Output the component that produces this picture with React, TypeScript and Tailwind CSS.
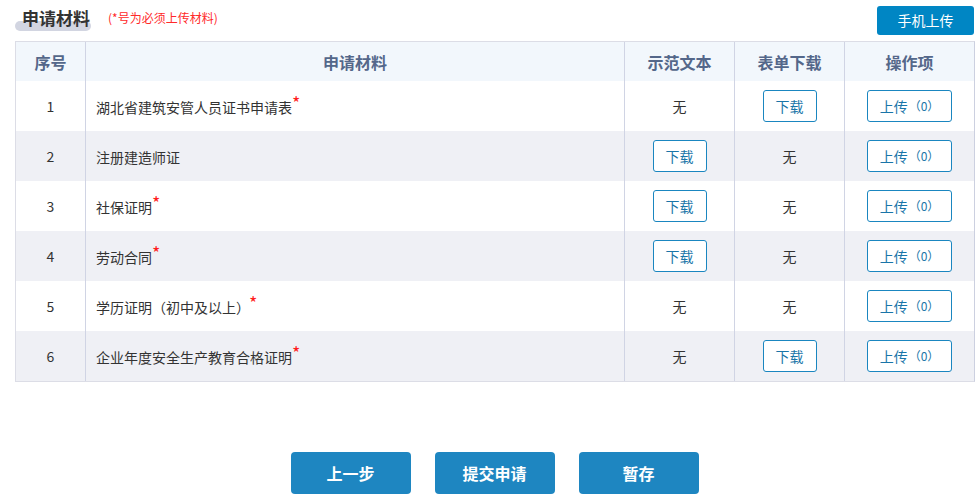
import React from "react";

const rows = [
  { no: 1, name: "湖北省建筑安管人员证书申请表", req: true, sample: false, form: true },
  { no: 2, name: "注册建造师证", req: false, sample: true, form: false },
  { no: 3, name: "社保证明", req: true, sample: true, form: false },
  { no: 4, name: "劳动合同", req: true, sample: true, form: false },
  { no: 5, name: "学历证明（初中及以上）", req: true, sample: false, form: false, gap: true },
  { no: 6, name: "企业年度安全生产教育合格证明", req: true, sample: false, form: true },
];

const font = { fontFamily: '"Microsoft YaHei", "Noto Sans CJK SC", "Liberation Sans", sans-serif' };

function DownloadBtn() {
  return (
    <button className="w-[54px] h-[32px] border border-[#1a86c0] rounded-[3px] text-[14px] text-[#1a75a8] bg-white">
      下载
    </button>
  );
}

function UploadBtn() {
  return (
    <button className="w-[85px] h-[32px] border border-[#1a86c0] rounded-[3px] text-[14px] text-[#1a75a8] bg-white flex items-center justify-center">
      上传<span className="text-[12px] ml-[1px]">（0）</span>
    </button>
  );
}

export default function App() {
  return (
    <div className="w-[977px] h-[496px] bg-white relative overflow-hidden" style={font}>
      <div className="flex items-start justify-between pl-[15px] pr-[3px] h-[41px]">
        <div className="flex items-start pt-[6px]">
          <div className="relative w-[76px] h-[26px]">
            <div className="absolute left-0 top-[15px] w-[76px] h-[10px] rounded-full bg-[#d2d5e1]" />
            <span className="absolute left-[7px] top-0 text-[17px] font-bold text-[#333] leading-[24px]">申请材料</span>
          </div>
          <span className="ml-[17px] mt-[4px] text-[12px] text-[#ff2a2a] leading-[16px]">(*号为必须上传材料)</span>
        </div>
        <button className="mt-[6px] w-[97px] h-[29px] rounded-[3px] bg-[#0086c4] text-white text-[14px]">
          手机上传
        </button>
      </div>
      <div className="mx-[15px] w-[960px] border border-[#dcdde6] border-r-[#ccd0e0]">
        <div className="grid grid-cols-[70px_539px_110px_110px_129px] h-[39px] bg-[#f2f7fc] text-[16px] font-bold text-[#54678a]">
          <div className="flex items-center justify-center border-r border-[#d0d4e4]">序号</div>
          <div className="flex items-center justify-center border-r border-[#d0d4e4]">申请材料</div>
          <div className="flex items-center justify-center border-r border-[#d0d4e4]">示范文本</div>
          <div className="flex items-center justify-center border-r border-[#d0d4e4]">表单下载</div>
          <div className="flex items-center justify-center">操作项</div>
        </div>
        {rows.map((r, i) => (
          <div
            key={r.no}
            className={`grid grid-cols-[70px_539px_110px_110px_129px] h-[50px] text-[14px] text-[#333] ${i % 2 === 1 ? "bg-[#eff0f5]" : "bg-white"}`}
          >
            <div className="flex items-center justify-center border-r border-[#d0d4e4]">{r.no}</div>
            <div className="flex items-center pl-[10px] border-r border-[#d0d4e4]">
              <span className="relative top-[1px]">{r.name}</span>
              {r.req && (
                <span className={`text-[#ff1a1a] text-[18px] leading-[18px] relative -top-[4px] ${r.gap ? "-ml-[1px]" : "ml-0"}`}>*</span>
              )}
            </div>
            <div className="flex items-center justify-center border-r border-[#d0d4e4]">
              {r.sample ? <DownloadBtn /> : "无"}
            </div>
            <div className="flex items-center justify-center border-r border-[#d0d4e4]">
              {r.form ? <DownloadBtn /> : "无"}
            </div>
            <div className="flex items-center justify-center">
              <UploadBtn />
            </div>
          </div>
        ))}
      </div>
      <div className="flex justify-center gap-[24px] mt-[70px] pl-[12px]">
        {["上一步", "提交申请", "暂存"].map((t) => (
          <button key={t} className="w-[120px] h-[42px] rounded-[4px] bg-[#1e86c1] text-white text-[16px] font-bold">
            {t}
          </button>
        ))}
      </div>
    </div>
  );
}
